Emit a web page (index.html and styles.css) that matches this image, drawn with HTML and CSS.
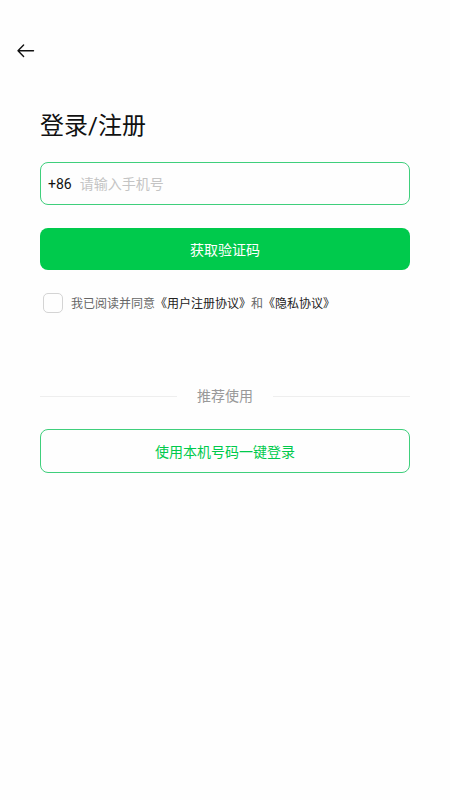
FILE: index.html
```html
<!DOCTYPE html>
<html lang="zh-CN">
<head>
<meta charset="utf-8">
<meta name="viewport" content="width=device-width, initial-scale=1">
<title>登录/注册</title>
<link rel="stylesheet" href="styles.css">
</head>
<body>
<header class="topbar">
  <button class="back" type="button" aria-label="返回">
    <svg width="20" height="16" viewBox="0 0 20 16" fill="none" stroke="currentColor" stroke-width="1.4" stroke-linecap="round" stroke-linejoin="round"><path d="M17.5 7.7H2M7.6 2L2 7.7l5.6 5.7"/></svg>
  </button>
</header>
<main class="content">
  <h1 class="title">登录/注册</h1>
  <form class="form">
    <div class="field">
      <label class="prefix" for="phone">+86</label>
      <input class="phone" id="phone" type="tel" placeholder="请输入手机号">
    </div>
    <button class="btn btn-primary" type="button">获取验证码</button>
    <div class="agree">
      <input class="check" id="agree" type="checkbox">
      <label class="terms" for="agree">我已阅读并同意<a href="#">《用户注册协议》</a>和<a href="#">《隐私协议》</a></label>
    </div>
  </form>
  <div class="divider">推荐使用</div>
  <button class="btn btn-outline" type="button">使用本机号码一键登录</button>
</main>
</body>
</html>
```

FILE: styles.css
```css
* {
  box-sizing: border-box;
}

body {
  margin: 0;
  background: #fefefe;
  color: #111;
  font-family: Roboto, "Noto Sans CJK SC", sans-serif;
}

button,
input {
  font: inherit;
}

.topbar {
  padding: 37px 12px 0;
}

.back {
  display: flex;
  align-items: center;
  justify-content: center;
  width: 28px;
  height: 28px;
  padding: 0;
  border: 0;
  background: none;
  color: #111;
}

.content {
  padding: 43px 40px;
}

.title {
  margin: 0 0 18px;
  font-size: 24px;
  line-height: 36px;
  font-weight: 400;
}

.field {
  display: flex;
  align-items: center;
  gap: 8px;
  height: 43px;
  padding: 0 7px;
  border: 1px solid #3fcf7c;
  border-radius: 8px;
  font-size: 14px;
}

.phone {
  flex: 1;
  min-width: 0;
  padding: 0;
  border: 0;
  outline: 0;
  background: none;
}

.phone::placeholder {
  color: #c4c4c4;
  opacity: 1;
}

.btn {
  display: block;
  width: 100%;
  padding: 0;
  border-radius: 8px;
  font-size: 14px;
}

.btn-primary {
  height: 42px;
  margin-top: 23px;
  border: 0;
  background: #00ca4c;
  color: #fff;
}

.btn-outline {
  height: 44px;
  margin-top: 22px;
  border: 1px solid #3fcf7c;
  background: none;
  color: #00ca4c;
}

.agree {
  display: flex;
  align-items: center;
  gap: 8px;
  margin-top: 22px;
  padding-left: 3px;
  color: #666;
  font-size: 12px;
  line-height: 20px;
}

.terms {
  padding-top: 2px;
}

.agree a {
  color: #222;
  text-decoration: none;
}

.check {
  appearance: none;
  flex: none;
  width: 20px;
  height: 20px;
  margin: 0;
  border: 1px solid #d4d4d4;
  border-radius: 5px;
}

.divider {
  display: flex;
  align-items: center;
  gap: 20px;
  margin-top: 71px;
  color: #999;
  font-size: 14px;
  line-height: 22px;
}

.divider::before,
.divider::after {
  content: "";
  flex: 1;
  height: 1px;
  background: #eee;
}
```
